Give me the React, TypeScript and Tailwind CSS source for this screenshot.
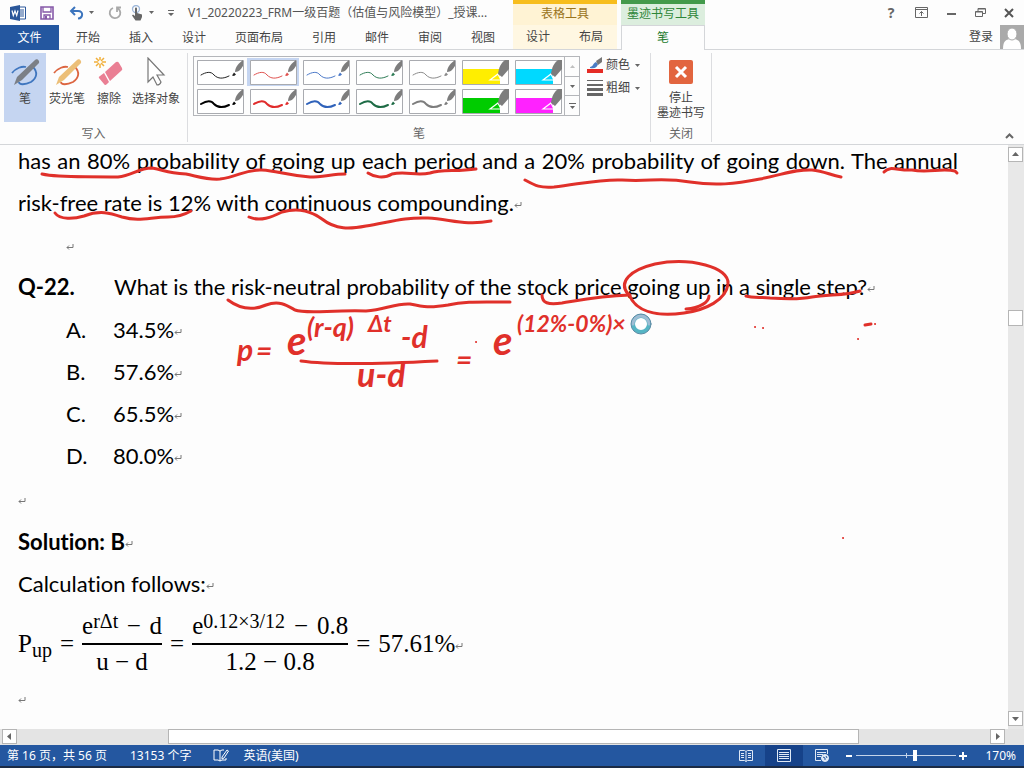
import React, { useState } from 'react';

const tabs = ['开始', '插入', '设计', '页面布局', '引用', '邮件', '审阅', '视图'];

const pens = [
  { id: 'thin-black', kind: 'pen', color: '#222222', width: 1 },
  { id: 'thin-red', kind: 'pen', color: '#e0524f', width: 1 },
  { id: 'thin-blue', kind: 'pen', color: '#4a78c8', width: 1 },
  { id: 'thin-green', kind: 'pen', color: '#2f7d57', width: 1 },
  { id: 'thin-gray', kind: 'pen', color: '#8a8a8a', width: 1 },
  { id: 'marker-yellow', kind: 'marker', color: '#ffee00', width: 0 },
  { id: 'marker-cyan', kind: 'marker', color: '#00d9ff', width: 0 },
  { id: 'bold-black', kind: 'pen', color: '#000000', width: 2 },
  { id: 'bold-red', kind: 'pen', color: '#e02c2c', width: 2 },
  { id: 'bold-blue', kind: 'pen', color: '#2f62ba', width: 2 },
  { id: 'bold-green', kind: 'pen', color: '#1d6b45', width: 2 },
  { id: 'bold-gray', kind: 'pen', color: '#7d7d7d', width: 2 },
  { id: 'marker-green', kind: 'marker', color: '#00cc00', width: 0 },
  { id: 'marker-magenta', kind: 'marker', color: '#ff22ff', width: 0 },
];

const answers = [
  { letter: 'A.', value: '34.5%' },
  { letter: 'B.', value: '57.6%' },
  { letter: 'C.', value: '65.5%' },
  { letter: 'D.', value: '80.0%' },
];

const underlines = [
  'M42 174C60 178 80 176 118 177C132 176 138 168 152 168C165 170 165 173 186 174C200 177 208 180 220 179C238 177 245 169 262 170C278 171 285 175 310 177C322 177 334 174 345 174',
  'M368 173C374 177 384 179 392 174C406 171 416 176 430 173C442 169 456 172 476 169',
  'M525 180C536 186 540 188 554 187C580 184 600 179 622 180C650 182 660 177 690 182C715 186 735 184 760 179C785 174 796 169 812 170C824 171 830 175 841 177',
  'M884 172C890 165 898 171 912 170C928 173 942 168 955 171L957 173',
  'M55 213C60 220 74 219 84 216C100 210 110 213 122 217C140 222 150 217 168 217C178 217 184 215 191 211',
  'M249 217C260 222 272 217 282 212C300 207 312 212 322 219C336 230 350 229 366 226C390 222 405 217 428 218C450 219 465 226 491 221',
  'M228 300C240 309 252 311 266 305C280 300 288 306 295 310C305 314 330 310 366 311C385 310 395 303 410 304C424 307 430 308 448 305C465 301 480 302 510 302',
  'M542 295C542 303 548 305 562 303C586 299 600 296 630 295',
  'M746 296C752 298 760 297 770 298C784 299 798 300 812 297C828 294 845 296 860 291',
];

function Mark() {
  return (
    <svg className="inline-block w-2 h-2 shrink-0" viewBox="0 0 8 8" fill="none" stroke="#777" aria-hidden="true">
      <path d="M7 1v3.5H1M3 2.5l-2 2 2 2" />
    </svg>
  );
}

function Caret({ className = '' }: { className?: string }) {
  return (
    <svg className={`w-[5px] h-[3px] shrink-0 ${className}`} viewBox="0 0 5 3" aria-hidden="true">
      <path d="M0 0h5L2.5 3z" fill="#666" />
    </svg>
  );
}

function QuickAccess() {
  return (
    <div className="flex h-[25px] items-center pl-[10px]">
      <svg className="w-4 h-4" viewBox="0 0 16 16" aria-label="Word">
        <path d="M9 2h6.500v12H9z" fill="#fff" stroke="#2b579a" />
        <path d="M10 5h4M10 7h4M10 9h4M10 11h4" stroke="#2b579a" />
        <path d="M0 2l10-2v16L0 14z" fill="#2b579a" />
        <path d="M2 5.500l1.300 5L5 6l1.700 4.500 1.300-5" fill="none" stroke="#fff" strokeWidth="1.200" />
      </svg>
      <button aria-label="保存" className="ml-[14px]">
        <svg className="w-[14px] h-[14px]" viewBox="0 0 14 14">
          <path d="M1 1h12v12H1z" fill="#fff" stroke="#8659a8" strokeWidth="1.600" />
          <path d="M3 1v5h8V1M4 13V9h6v4" fill="none" stroke="#8659a8" strokeWidth="1.300" />
          <path d="M5 10h2v3H5z" fill="#8659a8" />
        </svg>
      </button>
      <button aria-label="撤消" className="ml-[15px]">
        <svg className="w-[15px] h-[14px]" viewBox="0 0 15 14" fill="none" stroke="#3b74bd" strokeWidth="2">
          <path d="M6 1L2 5l4 4M2 5h7c6 0 5 7 0 7.500" />
        </svg>
      </button>
      <Caret className="ml-[5px]" />
      <button aria-label="重复" className="ml-[14px]">
        <svg className="w-[14px] h-[14px]" viewBox="0 0 14 14" fill="none" stroke="#a9a9a9" strokeWidth="1.800">
          <path d="M5 2a5.300 5.300 0 1 0 5 .5M13 1.500H9V6" />
        </svg>
      </button>
      <button aria-label="触摸模式" className="ml-[9px]">
        <svg className="w-3 h-4" viewBox="0 0 12 16">
          <circle cx="5" cy="4" r="3.500" fill="none" stroke="#9db7da" strokeWidth="1.300" />
          <path d="M4 3.500c0-1.500 2-1.500 2 0V8l5 1.500V12l-1.500 3.500H4.500L1 10.500l1-1 2 1.500z" fill="#666" />
        </svg>
      </button>
      <Caret className="ml-[6px]" />
      <svg className="ml-[14px] w-[6px] h-[6px]" viewBox="0 0 6 6" fill="#666">
        <path d="M0 0h6v1H0zM0 3h6L3 6z" />
      </svg>
      <h1 className="ml-[14px] text-xs whitespace-nowrap text-[#555]">V1_20220223_FRM一级百题（估值与风险模型）_授课...</h1>
    </div>
  );
}

function Header() {
  return (
    <header className="flex h-[50px] shrink-0 text-xs text-[#444]">
      <div className="flex w-[513px] shrink-0 flex-col">
        <QuickAccess />
        <nav className="flex h-[25px] items-stretch border-b border-[#d4d6d9]">
          <button className="-mb-px w-[59px] bg-[#2457a0] text-white">文件</button>
          <div className="flex gap-[29px] pt-px pl-[17px]">
            {tabs.map((tab) => (
              <button key={tab}>{tab}</button>
            ))}
          </div>
        </nav>
      </div>
      <div className="flex w-[104px] shrink-0 flex-col border-t-4 border-t-[#f7bd1d] border-b border-b-[#d4d6d9] bg-[#fff7e2]">
        <div className="flex h-[21px] items-center justify-center bg-[#fff3d4] pb-0.5 text-[#9a741c]">表格工具</div>
        <div className="flex flex-1 items-center gap-[29px] pl-[13px]">
          <button>设计</button>
          <button>布局</button>
        </div>
      </div>
      <div className="w-1 border-b border-[#d4d6d9]" />
      <div className="flex w-[84px] shrink-0 flex-col border-t-4 border-t-[#439a4b]">
        <div className="flex h-[21px] items-center justify-center bg-[#dceede] pb-0.5 text-[#2e8638]">墨迹书写工具</div>
        <button className="flex-1 border-x border-t border-[#d4d6d9] text-[#217a2c]">笔</button>
      </div>
      <div className="flex flex-1 flex-col border-b border-[#d4d6d9]">
        <div className="flex h-[25px] items-center justify-end gap-[18px] pr-[10px]">
          <button aria-label="帮助" className="w-3 text-sm font-bold text-[#666]">?</button>
          <button aria-label="功能区显示选项">
            <svg className="w-[13px] h-[11px]" viewBox="0 0 13 11" fill="none" stroke="#666">
              <path d="M.5.5h12v10H.5zM.5 2.500h12M6.500 9V4.500M4.500 6.500l2-2 2 2" />
            </svg>
          </button>
          <button aria-label="最小化">
            <svg className="w-[11px] h-[11px]" viewBox="0 0 11 11">
              <path d="M1 7h9" stroke="#666" strokeWidth="2" />
            </svg>
          </button>
          <button aria-label="还原">
            <svg className="w-[11px] h-[11px]" viewBox="0 0 11 11" fill="none" stroke="#666">
              <path d="M.5 4.500h7v5h-7zM.5 5h7M3 4V1.500h7.500v5H8M3 2h7" />
            </svg>
          </button>
          <button aria-label="关闭窗口">
            <svg className="w-[10px] h-[10px]" viewBox="0 0 10 10" stroke="#555" strokeWidth="2">
              <path d="M1 1l8 8M9 1L1 9" />
            </svg>
          </button>
        </div>
        <div className="flex h-6 items-center justify-end gap-[7px]">
          <a href="#login">登录</a>
          <svg className="w-6 h-6" viewBox="0 0 24 24">
            <path d="M0 0h24v24H0z" fill="#aaa" />
            <path d="M3 24c0-8 3-10 9-10s9 2 9 10z" fill="#fff" />
            <ellipse cx="12" cy="9" rx="5" ry="6" fill="#fff" stroke="#aaa" />
          </svg>
        </div>
      </div>
    </header>
  );
}

function PenSwatch({ kind, color, width }: { kind: string; color: string; width: number }) {
  return (
    <svg className="block w-[47px] h-[25px]" viewBox="0 0 47 25">
      <path d="M.5.500h46v24H.5z" fill="#fff" stroke="#a9abb0" />
      {kind === 'pen' ? (
        <>
          <path d="M4 15c5-3 10-4 13 0 4 4 9 4 15 1" fill="none" stroke={color} strokeWidth={width} strokeLinecap="round" />
          <path d="M35 15.500l2-3 2 2-2 1.500z" fill={color} />
          <path d="M38 12c0-5 4-9 8-12v6c-2 3-4 6-8 6z" fill="#7d7d7d" />
        </>
      ) : (
        <>
          <path d="M1 9h37v15H1z" fill={color} />
          <path d="M28 20l8-6 3 6z" fill={color} stroke="#fff" strokeWidth="1.200" />
          <path d="M36 14c1-7 3-11 7-14h4v9l-7 8z" fill="#7d7d7d" />
        </>
      )}
    </svg>
  );
}

function PenIcon({ body, ink, loop }: { body: string; ink: string; loop: string }) {
  return (
    <svg className="w-[30px] h-[30px]" viewBox="0 0 30 30" fill="none">
      <path d="M2 16c4-5 10-7 14-6" stroke={ink} strokeWidth="1.800" />
      <path d={loop} stroke={ink} strokeWidth="1.800" />
      <path d="M4 28l3-8L25 3c2-2 5 1 4 3L12 23z" fill={body} />
    </svg>
  );
}

function Ribbon() {
  const [selected, setSelected] = useState('thin-red');
  const loop = 'M23 10c5 5 4 11-2 15-6 3-12 3-12 0';

  return (
    <section className="flex h-[95px] shrink-0 border-b border-[#d4d6d9] pt-[3px] pb-0.5 text-xs text-[#444]">
      <div className="flex w-[188px] shrink-0 flex-col border-r border-[#dcdde0]">
        <div className="flex h-[69px] pl-1">
          <button className="flex w-[42px] flex-col items-center bg-[#c5d5f1] pt-1">
            <PenIcon body="#7b7f86" ink="#3f76bf" loop={loop} />
            <span className="pt-1">笔</span>
          </button>
          <button className="flex w-[42px] flex-col items-center pt-1">
            <PenIcon body="#ecbf78" ink="#dc6540" loop={loop} />
            <span className="pt-1">荧光笔</span>
          </button>
          <button className="flex w-[42px] flex-col items-center pt-1">
            <svg className="w-[30px] h-[30px]" viewBox="0 0 30 30">
              <path d="M6-1v4M6 7v4M0 5h4M8 5h4M2 1l3 3M7 6l3 3M10 1L7 4M5 6L2 9" stroke="#f1b03c" strokeWidth="1.500" />
              <path d="M11 15L22 5q2-1 3 1l3 5q1 2-1 3L16 24z" fill="#ea7f94" />
              <path d="M10 16l5 9-2 2q-2 2-3 0l-5-6q-1-1 1-2z" fill="#ea7f94" />
            </svg>
            <span className="pt-1">擦除</span>
          </button>
          <button className="flex w-[52px] flex-col items-center pt-1">
            <svg className="w-[30px] h-[30px]" viewBox="0 0 30 30">
              <path d="M7 1v24l5-5 4 8q3 0 4-3l-4-7h7z" fill="#fff" stroke="#777" strokeWidth="1.200" />
            </svg>
            <span className="pt-1 whitespace-nowrap">选择对象</span>
          </button>
        </div>
        <div className="flex h-5 items-end justify-center text-[#666]">写入</div>
      </div>

      <div className="flex w-[463px] shrink-0 flex-col border-r border-[#dcdde0]">
        <div className="flex h-[69px] gap-[7px] pt-[3px] pl-[5px]">
          <div className="flex h-[60px] border border-[#b4b6ba]">
            <div className="grid grid-cols-7 gap-px py-px">
              {pens.map((pen) => (
                <button
                  key={pen.id}
                  aria-label={pen.id}
                  onClick={() => setSelected(pen.id)}
                  className={`flex h-7 w-[52px] items-center justify-center ${selected === pen.id ? 'bg-[#c5d5f1]' : ''}`}
                >
                  <PenSwatch kind={pen.kind} color={pen.color} width={pen.width} />
                </button>
              ))}
            </div>
            <div className="flex w-[15px] flex-col divide-y divide-[#b4b6ba] border-l border-[#b4b6ba]">
              <button aria-label="上一行" className="flex flex-1 items-center justify-center">
                <Caret className="rotate-180 opacity-40" />
              </button>
              <button aria-label="下一行" className="flex flex-1 items-center justify-center">
                <Caret />
              </button>
              <button aria-label="其他" className="flex flex-1 flex-col items-center justify-center gap-0.5">
                <span className="h-px w-[7px] bg-[#666]" />
                <Caret />
              </button>
            </div>
          </div>
          <div className="flex flex-col gap-[5px]">
            <button className="flex h-[18px] items-center gap-[3px]">
              <svg className="w-4 h-4" viewBox="0 0 16 16">
                <path d="M3 10c3 0 3-4 6-5l2 2c-1 4-4 5-8 4z" fill="#4a7cc4" />
                <path d="M9 4l6-4v5l-4 3z" fill="#777" />
                <path d="M0 12h16v4H0z" fill="#e52b25" />
              </svg>
              <span>颜色</span>
              <Caret className="ml-0.5" />
            </button>
            <button className="flex h-[18px] items-center gap-[3px]">
              <svg className="w-4 h-4" viewBox="0 0 16 16" fill="#666">
                <path d="M0 0h16v1H0zM0 4h16v2H0zM0 8h16v3H0zM0 13h16v3H0z" />
              </svg>
              <span>粗细</span>
              <Caret className="ml-0.5" />
            </button>
          </div>
        </div>
        <div className="flex h-5 items-end justify-center text-[#666]">笔</div>
      </div>

      <div className="flex w-[61px] shrink-0 flex-col border-r border-[#dcdde0]">
        <button className="flex h-[69px] flex-col items-center pt-[7px] leading-[15px]">
          <svg className="w-6 h-6 shrink-0" viewBox="0 0 24 24">
            <rect width="24" height="24" rx="2" fill="#e2653f" />
            <path d="M7 7l10 10M17 7L7 17" stroke="#fff" strokeWidth="3" />
          </svg>
          <span className="pt-[6px]">停止</span>
          <span>墨迹书写</span>
        </button>
        <div className="flex h-5 items-end justify-center text-[#666]">关闭</div>
      </div>

      <div className="flex flex-1 items-end justify-end pr-[10px] pb-[3px]">
        <button aria-label="折叠功能区">
          <svg className="w-[9px] h-[6px]" viewBox="0 0 9 6" fill="none" stroke="#666" strokeWidth="2">
            <path d="M1 5l3.500-3.500L8 5" />
          </svg>
        </button>
      </div>
    </section>
  );
}

// Pen strokes float over the page, in page coordinates.
function InkLayer() {
  return (
    <svg
      className="pointer-events-none absolute top-0 left-0 h-[582px] w-[1007px]"
      viewBox="0 145 1007 582"
      fill="none"
      stroke="#e0302a"
      strokeWidth="3"
      strokeLinecap="round"
      strokeLinejoin="round"
    >
      {underlines.map((d) => (
        <path key={d} d={d} />
      ))}
      <path d="M628 294C618 282 630 270 655 264C690 257 730 267 728 284C726 300 706 310 684 313C655 317 635 311 629 294M686 309C700 308 709 302 709 296" />
      <path d="M301 361C330 365 380 364 437 361" />
      <path d="M755 327h.1M763 328h.1M858 339h.1M875 324h.1M843 538h.1M476 342h.1" strokeWidth="2" />
      <path d="M865 325l6-1" />
      <g fill="#e0302a" stroke="none" className="font-['Lato',sans-serif] font-bold italic">
        <text x="237" y="361" fontSize="30">p</text>
        <text x="256" y="361" fontSize="28">=</text>
        <text x="287" y="355" fontSize="40">e</text>
        <text x="307" y="337" fontSize="27">(r-q)</text>
        <text x="368" y="332" fontSize="23">Δt</text>
        <text x="401" y="348" fontSize="30">-d</text>
        <text x="357" y="387" fontSize="34">u-d</text>
        <text x="456" y="370" fontSize="28">=</text>
        <text x="493" y="355" fontSize="40">e</text>
        <text x="517" y="332" fontSize="23">(12%-0%)×</text>
      </g>
      <circle cx="641" cy="324" r="8" fill="#fff" stroke="#55b5c4" strokeWidth="4" />
      <path d="M633 324a8 8 0 0 1 16 0" stroke="#9fbdd4" strokeWidth="3" />
      <circle cx="641" cy="324" r="10" stroke="#5d8ba5" strokeWidth="1" />
    </svg>
  );
}

function Equation() {
  return (
    <div className="flex h-[78px] items-center font-['Liberation_Serif',serif] text-[25px] leading-[34px] whitespace-nowrap">
      <span>P<sub className="text-[20px]">up</sub></span>
      <span className="px-2">=</span>
      <span className="flex w-20 flex-col items-center">
        <span className="flex w-full justify-between border-b-2 border-black">
          <span className="flex">e<sup className="top-0 text-[20px] leading-[24px]">rΔt</sup></span>
          <span>−</span>
          <span>d</span>
        </span>
        <span>u − d</span>
      </span>
      <span className="px-2">=</span>
      <span className="flex w-[156px] flex-col items-center">
        <span className="flex w-full justify-between border-b-2 border-black">
          <span className="flex">e<sup className="top-0 text-[20px] leading-[24px]">0.12×3/12</sup></span>
          <span>−</span>
          <span>0.8</span>
        </span>
        <span>1.2 − 0.8</span>
      </span>
      <span className="px-2">=</span>
      <span>57.61%<Mark /></span>
    </div>
  );
}

function Page() {
  return (
    <article className="-mt-[5px] pl-[18px] font-['Lato',sans-serif] text-[22px] leading-[42px] text-black [font-variant-ligatures:none]">
      <p className="max-w-[940px] text-justify">
        has an 80% probability of going up each period and a 20% probability of going down. The annual
        risk-free rate is 12% with continuous compounding.<Mark />
      </p>
      <p className="pl-12"><Mark /></p>
      <div className="flex whitespace-nowrap">
        <strong className="w-24">Q-22.</strong>
        <p>What is the risk-neutral probability of the stock price going up in a single step?<Mark /></p>
      </div>
      <ol className="mt-px pl-12">
        {answers.map((answer) => (
          <li key={answer.letter} className="flex">
            <span className="w-[47px]">{answer.letter}</span>
            <span>{answer.value}<Mark /></span>
          </li>
        ))}
      </ol>
      <p className="mt-px"><Mark /></p>
      <p className="mt-px font-bold">Solution: B<Mark /></p>
      <p>Calculation follows:<Mark /></p>
      <Equation />
      <p className="leading-[30px]"><Mark /></p>
    </article>
  );
}

function ScrollButton({ label, d }: { label: string; d: string }) {
  return (
    <button aria-label={label} className="flex h-[15px] w-[15px] shrink-0 items-center justify-center border border-[#b5b5b5] bg-white">
      <svg className="w-[7px] h-[7px]" viewBox="0 0 7 7" fill="#666">
        <path d={d} />
      </svg>
    </button>
  );
}

function StatusBar() {
  const [zoom, setZoom] = useState(59);

  return (
    <footer className="flex h-[23px] shrink-0 items-center border-b-2 border-[#1b2b45] bg-[#2457a0] pl-[7px] pr-2 text-xs text-white">
      <span>第 16 页，共 56 页</span>
      <span className="ml-[23px]">13153 个字</span>
      <svg className="ml-[22px] w-4 h-[13px]" viewBox="0 0 16 13" fill="none" stroke="#fff">
        <path d="M7 2L5 1H1v10h4l2 1 2-1h4V9M7 2v10M7 2l2-1h2M9 8l5-7 1.500 1L11 9l-2 1z" />
      </svg>
      <span className="ml-[14px]">英语(美国)</span>
      <div className="ml-auto flex h-full items-center">
        <button aria-label="阅读视图" className="flex h-full w-[38px] items-center justify-center">
          <svg className="w-[14px] h-3" viewBox="0 0 14 12" fill="none" stroke="#dfe8f5">
            <path d="M7 1.500L5.500.500h-5v10h5l1.500 1 1.500-1h5V.5h-5zv10M2 3.500h3M2 5.500h3M2 7.500h3M9 3.500h3M9 5.500h3M9 7.500h3" />
          </svg>
        </button>
        <button aria-label="页面视图" className="flex h-full w-[38px] items-center justify-center bg-[#164289]">
          <svg className="w-[14px] h-[13px]" viewBox="0 0 14 13" fill="none" stroke="#dfe8f5">
            <path d="M.5.500h13v12H.5zM2 3.500h10M2 5.500h10M2 7.500h10M2 9.500h10" />
          </svg>
        </button>
        <button aria-label="Web 版式视图" className="flex h-full w-[38px] items-center justify-center">
          <svg className="w-[14px] h-[13px]" viewBox="0 0 14 13" fill="none" stroke="#dfe8f5">
            <path d="M12.500 5V.5H.5v11H6M2 3.500h9M2 5.500h6M2 7.500h4" />
            <circle cx="10" cy="9" r="3.500" fill="#dfe8f5" />
            <path d="M8 8l2 1v2M11 7l1 2" stroke="#2457a0" />
          </svg>
        </button>
        <button aria-label="缩小" className="ml-1 flex w-2 justify-center">
          <span className="h-0.5 w-[6px] bg-white" />
        </button>
        <input
          type="range"
          aria-label="显示比例"
          value={zoom}
          onChange={(e) => setZoom(Number(e.target.value))}
          className="mx-[3px] h-3 w-[100px] appearance-none bg-[linear-gradient(#c5d4ea,#c5d4ea),linear-gradient(#c5d4ea,#c5d4ea)] bg-[length:100%_1px,1px_5px] bg-center bg-no-repeat [&::-webkit-slider-thumb]:h-[11px] [&::-webkit-slider-thumb]:w-1 [&::-webkit-slider-thumb]:appearance-none [&::-webkit-slider-thumb]:bg-white"
        />
        <button aria-label="放大">
          <svg className="w-2 h-2" viewBox="0 0 8 8" stroke="#fff" strokeWidth="2">
            <path d="M0 4h8M4 0v8" />
          </svg>
        </button>
        <span className="ml-[18px]">170%</span>
      </div>
    </footer>
  );
}

export default function App() {
  return (
    <div className="flex h-screen flex-col overflow-hidden bg-[#fdfdfd] font-['Noto_Sans','Noto_Sans_CJK_SC',sans-serif]">
      <Header />
      <Ribbon />
      <main className="flex min-h-0 flex-1">
        <div className="relative min-w-0 flex-1 overflow-hidden">
          <Page />
          <InkLayer />
        </div>
        <div className="flex w-4 shrink-0 flex-col bg-[#e8e8e8] pt-0.5 pb-[3px]">
          <ScrollButton label="向上滚动" d="M0 5h7L3.500 1z" />
          <div className="flex-[27]" />
          <div className="h-4 w-[15px] border border-[#b5b5b5] bg-white" />
          <div className="flex-[70]" />
          <ScrollButton label="向下滚动" d="M0 2h7L3.500 6z" />
        </div>
      </main>
      <div className="flex h-4 shrink-0 items-start bg-[#e4e4e4] pr-[19px] pl-0.5">
        <ScrollButton label="向左滚动" d="M5 0v7L1 3.500z" />
        <div className="flex-[151]" />
        <div className="h-[15px] flex-[691] border border-[#b5b5b5] bg-white" />
        <div className="flex-[131]" />
        <ScrollButton label="向右滚动" d="M2 0v7l4-3.500z" />
      </div>
      <StatusBar />
    </div>
  );
}
